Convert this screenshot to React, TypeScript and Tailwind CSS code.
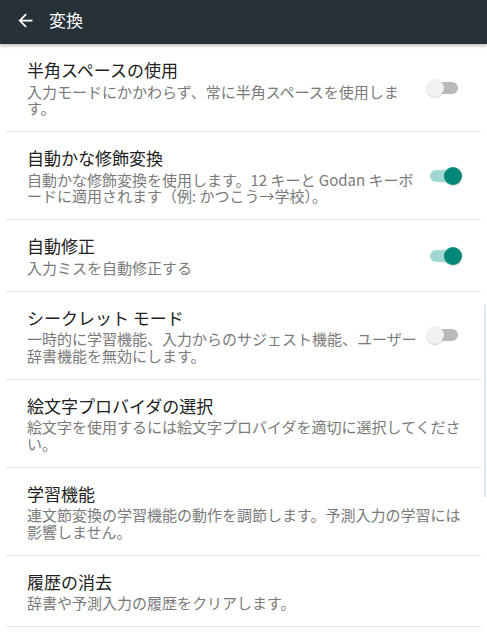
import React from 'react';

type Setting = {
  title: string;
  lines: string[];
  toggle?: boolean;
};

const SETTINGS: Setting[] = [
  { title: '半角スペースの使用', lines: ['入力モードにかかわらず、常に半角スペースを使用しま', 'す。'], toggle: false },
  { title: '自動かな修飾変換', lines: ['自動かな修飾変換を使用します。12 キーと Godan キーボ', 'ードに適用されます（例: かつこう→学校）。'], toggle: true },
  { title: '自動修正', lines: ['入力ミスを自動修正する'], toggle: true },
  { title: 'シークレット モード', lines: ['一時的に学習機能、入力からのサジェスト機能、ユーザー', '辞書機能を無効にします。'], toggle: false },
  { title: '絵文字プロバイダの選択', lines: ['絵文字を使用するには絵文字プロバイダを適切に選択してくださ', 'い。'] },
  { title: '学習機能', lines: ['連文節変換の学習機能の動作を調節します。予測入力の学習には', '影響しません。'] },
  { title: '履歴の消去', lines: ['辞書や予測入力の履歴をクリアします。'] },
];

const Toggle: React.FC<{ on: boolean }> = ({ on }) => (
  <div className={`flex items-center w-[36px] h-[20px] flex-shrink-0 ${on ? 'justify-end' : 'justify-start'}`}>
    <div className={`relative w-full mx-[4px] h-[12px] rounded-full ${on ? 'bg-[#a3d8d2]' : 'bg-[#b9b9b9]'}`}>
      <div
        className={`absolute top-[-3px] w-[18px] h-[18px] rounded-full shadow-[0_1px_1px_rgba(0,0,0,0.18)] ${
          on ? 'right-[-4px] bg-[#00897b]' : 'left-[-4px] bg-[#f1f1f1]'
        }`}
      />
    </div>
  </div>
);

export default function App() {
  return (
    <div
      className="relative w-[487px] h-[640px] bg-white overflow-hidden"
      style={{ fontFamily: '"Noto Sans CJK JP", "Noto Sans", sans-serif' }}
    >
      <div className="relative z-10 h-[44px] bg-[#263238] flex items-center pb-[4px] shadow-[0_2px_3px_rgba(0,0,0,0.25)]">
        <svg width="21" height="21" viewBox="0 0 24 24" className="ml-[15px]" fill="#ffffff">
          <path d="M20 11H7.83l5.59-5.59L12 4l-8 8 8 8 1.41-1.41L7.83 13H20v-2z" />
        </svg>
        <span className="ml-[13px] text-[17px] text-white">変換</span>
      </div>

      <div className="mx-[6px]">
        {SETTINGS.map((s) => (
          <div key={s.title} className="flex items-center border-b border-[#e3e3e3] px-[21px] pt-[15px] pb-[14.5px]">
            <div className="flex-1 min-w-0">
              <div className="text-[17px] leading-[22px] text-[#212121]">{s.title}</div>
              <div className="mt-[2.5px]">
                {s.lines.map((l) => (
                  <div key={l} className="text-[15px] leading-[16.5px] text-[#7a7a7a] whitespace-nowrap">
                    {l}
                  </div>
                ))}
              </div>
            </div>
            {s.toggle !== undefined && (
              <div className="ml-auto mr-[-2px]">
                <Toggle on={s.toggle} />
              </div>
            )}
          </div>
        ))}
      </div>

      <div className="absolute right-[1px] top-[305px] w-[2px] h-[192px] bg-[#dbe9f5]" />
    </div>
  );
}
